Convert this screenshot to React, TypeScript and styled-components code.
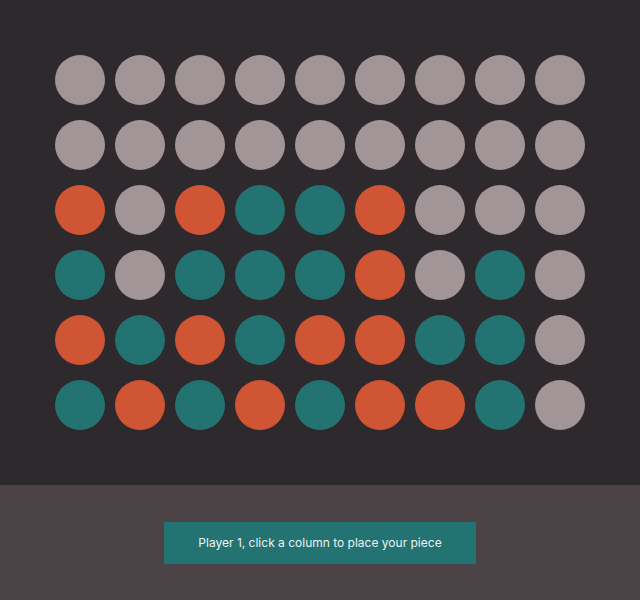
import React from "react";
import styled, { createGlobalStyle } from "styled-components";

const GlobalStyle = createGlobalStyle`
	html, body {
		margin: 0;
		padding: 0;
		background-color: #2e292c;
		font-family: Inter, "Noto Sans", sans-serif;
	}
`;

type Cell = "empty" | "p1" | "p2";

const CELL_COLORS: Record<Cell, string> = {
	empty: "#a29598",
	p1: "#d05535",
	p2: "#227371",
};

const Page = styled.div`
	display: flex;
	flex-direction: column;
	width: 640px;
	height: 600px;
`;

const BoardArea = styled.div`
	height: 485px;
	display: flex;
	justify-content: center;
	align-items: center;
	background-color: #2e292c;
`;

const Board = styled.div`
	display: grid;
	grid-template-columns: repeat(9, 50px);
	column-gap: 10px;
	row-gap: 15px;
`;

const Slot = styled.div<{ $cell: Cell }>`
	width: 50px;
	height: 50px;
	border-radius: 50%;
	background-color: ${(props) => CELL_COLORS[props.$cell]};
	cursor: pointer;
`;

const StatusBar = styled.div`
	flex: 1;
	display: flex;
	justify-content: center;
	align-items: center;
	background-color: #4b4346;
`;

const StatusMessage = styled.div`
	height: 42px;
	line-height: 42px;
	padding: 0 34px;
	background-color: #227371;
	color: #eef2f1;
	font-size: 12px;
`;

const ROWS = [
	".........",
	".........",
	"O.OTTO...",
	"T.TTTO.T.",
	"OTOTOOTT.",
	"TOTOTOOT.",
];

const toCell = (ch: string): Cell => (ch === "O" ? "p1" : ch === "T" ? "p2" : "empty");

function App() {
	const cells = ROWS.flatMap((row) => row.split("").map(toCell));

	return (
		<Page>
			<GlobalStyle />
			<BoardArea>
				<Board>
					{cells.map((c, i) => (
						<Slot key={i} $cell={c} />
					))}
				</Board>
			</BoardArea>
			<StatusBar>
				<StatusMessage>Player 1, click a column to place your piece</StatusMessage>
			</StatusBar>
		</Page>
	);
}

export default App;
